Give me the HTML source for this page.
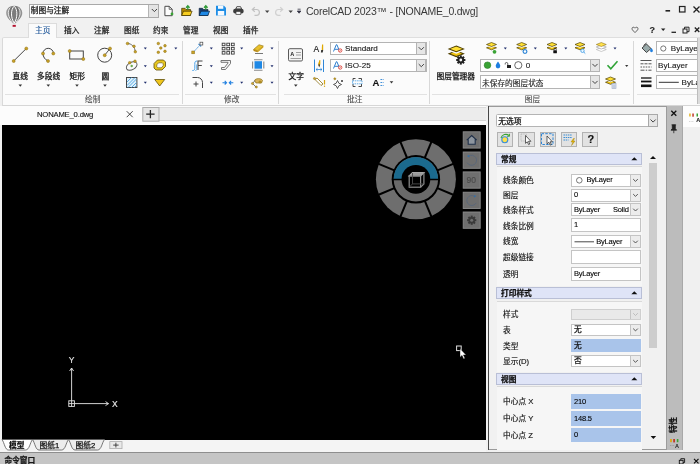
<!DOCTYPE html>
<html lang="zh-CN">
<head>
<meta charset="utf-8">
<title>CorelCAD 2023 - [NONAME_0.dwg]</title>
<style>
html,body{margin:0;padding:0;}
body{width:700px;height:464px;overflow:hidden;position:relative;background:#f0f0f0;
  font-family:"Liberation Sans","Noto Sans CJK SC",sans-serif;font-size:7.7px;color:#1a1a1a;}
.a{position:absolute;}
.t{position:absolute;white-space:nowrap;line-height:1;-webkit-text-stroke:0.25px currentColor;}
.n{-webkit-text-stroke:0.12px currentColor !important;}
svg{position:absolute;overflow:visible;}
/* title */
#title{left:0;top:0;width:700px;height:38px;background:#f1f1f1;}
#combo{left:29px;top:3.5px;width:130px;height:14px;background:#fff;border:1px solid #a9a9a9;box-sizing:border-box;}
#combo .btn{right:0;top:0;width:9px;height:12px;background:#e4e4e4;border-left:1px solid #b5b5b5;}
/* ribbon */
#tabact{left:27.8px;top:22.8px;width:29.5px;height:15.2px;background:#fbfbfb;border:1px solid #dcdcdc;border-bottom:none;box-sizing:border-box;}
#ribbon{left:1.5px;top:37px;width:698.5px;height:68.5px;background:#fbfbfb;border-top:1px solid #dedede;border-left:1px solid #d9d9d9;border-radius:2px 0 0 0;border-bottom:1px solid #d6d6d6;box-sizing:border-box;}
.tab{font-size:7.7px;top:27.4px;color:#222;}
.gl{font-size:7.7px;top:96.4px;color:#4a4a4a;-webkit-text-stroke:0.1px currentColor;}
.sep{width:1px;background:#d8d8d8;top:41px;height:63px;}
.hsep{height:1px;background:#e2e2e2;top:93.8px;}
.lbl{font-size:7.7px;color:#111;}
.dd{width:0;height:0;border-left:2px solid transparent;border-right:2px solid transparent;border-top:2.5px solid #333;}
.ddb{width:0;height:0;border-left:2px solid transparent;border-right:2px solid transparent;border-top:2.5px solid #223a7a;}
.cb{background:#fff;border:1px solid #b4b4b4;box-sizing:border-box;}
.cbb{background:#e6e6e6;border:1px solid #b4b4b4;box-sizing:border-box;}
/* doc tabs */
#docbar{left:0;top:105.5px;width:487px;height:19px;background:#fcfcfc;}
#docgray{left:158px;top:107px;width:329px;height:14.3px;background:#ececec;border-top:1px solid #dadada;border-bottom:1px solid #d6d6d6;box-sizing:border-box;}
#doctab{left:2px;top:106px;width:139px;height:19px;background:#fcfcfc;}
/* canvas */
#canvas{left:2px;top:124.5px;width:484px;height:315px;background:#000;}
/* bottom */
#btabs{left:0;top:439.5px;width:700px;height:12px;background:#f4f4f4;}
#cmd{left:0;top:451.5px;width:700px;height:13px;background:#c5c5c5;border-top:1.3px solid #8e8e8e;box-sizing:border-box;}
/* right panel */
#pp{left:488px;top:106px;width:172px;height:340px;background:#fff;border:1px solid #8c8c8c;box-sizing:border-box;}
#pstrip{left:660px;top:106px;width:20px;height:340px;background:#bdbdbd;}
#rstrip{left:680px;top:106px;width:20px;height:345px;background:#f6f6f6;}
.sec{left:496px;width:146px;height:13px;background:#dfe4f7;border:1px solid #b9bfd6;box-sizing:border-box;}
.sec .t{left:4px;top:2px;font-size:7.7px;font-weight:bold;color:#111;}
.pl{font-size:7.7px;color:#111;left:503px;-webkit-text-stroke:0.15px currentColor;}
.pv{left:571px;width:70px;height:13px;background:#fff;border:1px solid #c4c4c4;box-sizing:border-box;}
.pv .t{left:3px;top:2.5px;font-size:7.7px;color:#111;}
.pv .t.n{font-size:7.5px;letter-spacing:-0.2px;color:#000;-webkit-text-stroke:0.1px #000 !important;}
.pvb{background:#a9c4ea;border-color:#a9c4ea;}
.pdd{right:0;top:0;width:9px;height:11px;background:#ececec;border-left:1px solid #c4c4c4;}
</style>
</head>
<body>
<div id="root" style="position:absolute;left:0;top:0;width:700px;height:464px;will-change:transform;">
<!-- TITLE BAR -->
<div id="title" class="a"></div>
<div id="combo" class="a"><span class="t" style="left:0.8px;top:2.8px;font-size:7.7px;">制图与注解</span><div class="btn a"></div></div>
<div class="t n" style="left:306px;top:6.3px;font-size:10.5px;letter-spacing:-0.23px;color:#3a3a3a;-webkit-text-stroke:0 !important;">CorelCAD 2023™ - [NONAME_0.dwg]</div>

<svg id="icons" width="700" height="464" viewBox="0 0 700 464" style="left:0;top:0;">
<defs><linearGradient id="bg1" x1="0" x2="1"><stop offset="0" stop-color="#a5a5a5"/><stop offset=".3" stop-color="#6f6f6f"/><stop offset=".5" stop-color="#8a8a8a"/><stop offset=".7" stop-color="#6a6a6a"/><stop offset="1" stop-color="#9a9a9a"/></linearGradient></defs>
<path d="M14.2 5.8C9 5.8 6.1 9.5 6.1 13c0 4.5 4.9 8 6.9 10.3h2.4c2-2.3 6.9-5.8 6.9-10.3 0-3.5-2.9-7.2-8.1-7.2z" fill="url(#bg1)"/>
<path d="M14.2 6.3c-3.6 3-3.6 11.5 0 16.8 3.6-5.3 3.6-13.8 0-16.8z" fill="#7c7c7c" stroke="#fff" stroke-width="1"/>
<path d="M10.3 7.5c-3.3 3.5-2.5 9.5 2.3 15M18.1 7.5c3.3 3.5 2.5 9.5-2.3 15" fill="none" stroke="#f4f4f4" stroke-width=".9"/>
<rect x="12.6" y="24.9" width="3.2" height="1.9" fill="#b3122f"/>
<path d="M164.9 6.3h4.3l3 3v6.4h-7.3z" fill="#fdfdfd" stroke="#4a4a4a" stroke-width="1"/><path d="M169.2 6.3v3h3" fill="none" stroke="#4a4a4a" stroke-width=".8"/><circle cx="172" cy="13.9" r="1.4" fill="#3aa335"/>
<path d="M181.7 8.3h3.3l1 1.2h4.5v6h-8.8z" fill="#b88a00" stroke="#3f3200" stroke-width=".7"/><path d="M181.7 15.5l1.8-4.3h8.6l-1.8 4.3z" fill="#f7cd1f" stroke="#3f3200" stroke-width=".7"/><path d="M187.8 9.8v-3.8m-1.8 1.7l1.8-1.9 1.8 1.9" stroke="#2f9a37" stroke-width="1.3" fill="none"/>
<path d="M199.2 8.3h3.3l1 1.2h4.5v6h-8.8z" fill="#1a3a6a" stroke="#10243f" stroke-width=".7"/><path d="M199.2 15.5l1.8-4.3h8.6l-1.8 4.3z" fill="#1e88e5" stroke="#10243f" stroke-width=".7"/><path d="M205.8 9.8v-3.8m-1.8 1.7l1.8-1.9 1.8 1.9" stroke="#2f9a37" stroke-width="1.3" fill="none"/>
<path d="M216 5.8h8l2 2v7.7h-10z" fill="#1e8ee6"/><rect x="218" y="5.8" width="5.3" height="3" fill="#f4f9ff"/><rect x="217.8" y="11" width="6.4" height="4.5" fill="#f4f9ff"/>
<path d="M235.8 9l1-2.3h3.8l1 2.3z" fill="#fff" stroke="#3c3c3c" stroke-width=".9"/><rect x="233.2" y="8.8" width="10.4" height="4.6" rx="2" fill="#3c3c3c"/><rect x="236" y="11.4" width="4.8" height="3" fill="#f4f4f4" stroke="#3c3c3c" stroke-width=".7"/>
<path d="M253 9.5h3.5a2.8 2.8 0 0 1 0 5.8h-2" fill="none" stroke="#c2c2c2" stroke-width="1.2"/><path d="M254.8 7.2l-2.5 2.3 2.5 2.3" fill="none" stroke="#c2c2c2" stroke-width="1.2"/>
<path d="M282 9.5h-3.5a2.8 2.8 0 0 0 0 5.8h2" fill="none" stroke="#d0d0d0" stroke-width="1.2"/><path d="M280.2 7.2l2.5 2.3-2.5 2.3" fill="none" stroke="#d0d0d0" stroke-width="1.2"/>
<path d="M265 10.5h4.4l-2.2 2.6z" fill="#444"/><path d="M288.5 10.5h4.4l-2.2 2.6z" fill="#444"/>
<path d="M297.6 9.2h3M297.3 11h3.6l-1.8 2.2z" fill="#334" stroke="#334" stroke-width=".8"/>
<path d="M151.8 9l2.6 2.6 2.6-2.6" fill="none" stroke="#444" stroke-width="1"/>
<path d="M665.5 10.8h4.6" stroke="#222" stroke-width="1.6"/><rect x="679.5" y="6.5" width="5.5" height="5.5" fill="none" stroke="#222" stroke-width="1.2"/><path d="M693.5 6.5l6 6m0-6l-6 6" stroke="#222" stroke-width="1.3"/>
<path d="M635 32.5c-1-1-3-2.2-3-3.8 0-1.8 2.3-2 3-.5.7-1.5 3-1.3 3 .5 0 1.6-2 2.8-3 3.8z" fill="none" stroke="#444" stroke-width=".8"/>
<path d="M661 28.5h4.4l-2.2 2.6z" fill="#222"/><path d="M671.5 32.3h4.5" stroke="#222" stroke-width="1.3"/>
<rect x="683" y="29" width="4" height="4" fill="none" stroke="#222" stroke-width="1"/><path d="M684.5 29v-1.8h4.5v4.5h-2" fill="none" stroke="#222" stroke-width="1"/>
<path d="M694.8 27.5l4.5 4.5m0-4.5l-4.5 4.5" stroke="#222" stroke-width="1.3"/>
</svg>
<span class="t n" style="left:649.5px;top:25.5px;font-size:9px;font-weight:bold;color:#222;">?</span>
<!-- RIBBON TABS -->
<div id="ribbon" class="a"></div>
<div id="tabact" class="a"></div>
<span class="t tab" style="left:35px;color:#2a5f9e;-webkit-text-stroke:0.15px currentColor;">主页</span>
<span class="t tab" style="left:64px;">插入</span>
<span class="t tab" style="left:94px;">注解</span>
<span class="t tab" style="left:124px;">图纸</span>
<span class="t tab" style="left:153px;">约束</span>
<span class="t tab" style="left:183px;">管理</span>
<span class="t tab" style="left:213px;">视图</span>
<span class="t tab" style="left:243px;">插件</span>

<svg id="rib1" width="700" height="464" viewBox="0 0 700 464" style="left:0;top:0;">
<path d="M13.7 61L26.3 48.5" stroke="#444" stroke-width="1"/><circle cx="13.7" cy="61" r="1.5" fill="#c9a227" stroke="#8a6d10" stroke-width=".5"/><circle cx="26.3" cy="48.5" r="1.5" fill="#c9a227" stroke="#8a6d10" stroke-width=".5"/>
<path d="M48 61c-3-1.5-5-4-5-7.5a5.2 5.2 0 0 1 10.4 0" fill="none" stroke="#444" stroke-width="1"/><circle cx="43" cy="53.5" r="1.5" fill="#c9a227" stroke="#8a6d10" stroke-width=".5"/><circle cx="53.3" cy="53.5" r="1.5" fill="#c9a227" stroke="#8a6d10" stroke-width=".5"/><circle cx="48" cy="61" r="1.5" fill="#c9a227" stroke="#8a6d10" stroke-width=".5"/>
<rect x="69.7" y="51" width="13.6" height="8" fill="none" stroke="#444" stroke-width="1"/><circle cx="69.7" cy="51" r="1.5" fill="#c9a227" stroke="#8a6d10" stroke-width=".5"/><circle cx="83.3" cy="59" r="1.5" fill="#c9a227" stroke="#8a6d10" stroke-width=".5"/>
<circle cx="104.7" cy="55.2" r="7" fill="none" stroke="#444" stroke-width="1"/><path d="M104.7 55.2L110 48.5" stroke="#444" stroke-width=".9"/><circle cx="104.7" cy="55.2" r="1.5" fill="#c9a227" stroke="#8a6d10" stroke-width=".5"/><circle cx="110" cy="48.5" r="1.5" fill="#c9a227" stroke="#8a6d10" stroke-width=".5"/>
<path d="M18.5 84.6h3.6l-1.8 2.2z" fill="#333"/>
<path d="M46.5 84.6h3.6l-1.8 2.2z" fill="#333"/>
<path d="M75.2 84.6h3.6l-1.8 2.2z" fill="#333"/>
<path d="M103.2 84.6h3.6l-1.8 2.2z" fill="#333"/>
<path d="M294.0 84.6h3.6l-1.8 2.2z" fill="#333"/>
<path d="M127.5 43.5c4 0 7.5 3.5 7.8 8.3" fill="none" stroke="#555" stroke-width=".9"/><circle cx="127.5" cy="43.5" r="1.3" fill="#c9a227" stroke="#8a6d10" stroke-width=".5"/><circle cx="134" cy="46.3" r="1.3" fill="#c9a227" stroke="#8a6d10" stroke-width=".5"/><circle cx="135.3" cy="51.8" r="1.3" fill="#c9a227" stroke="#8a6d10" stroke-width=".5"/>
<ellipse cx="131.7" cy="66" rx="5.8" ry="3.7" transform="rotate(-30 131.7 66)" fill="none" stroke="#555" stroke-width=".9"/><circle cx="129.7" cy="62.7" r="1.3" fill="#c9a227" stroke="#8a6d10" stroke-width=".5"/><circle cx="135" cy="61.2" r="1.3" fill="#c9a227" stroke="#8a6d10" stroke-width=".5"/><circle cx="131.7" cy="66" r="1.2" fill="#6aa84f"/>
<rect x="126.5" y="77.5" width="10.4" height="10" fill="#dff0fb" stroke="#444" stroke-width="1"/><path d="M127 82l4.5-4.5M127 85.5l8-8M128 87.5l8.5-8.5M131.5 87.5l5-5M134.5 87.5l2-2" stroke="#4aa3e0" stroke-width=".9"/>
<path d="M143.8 47.5h3l-1.5 2z" fill="#1f2d6b"/>
<path d="M143.8 65.2h3l-1.5 2z" fill="#1f2d6b"/>
<path d="M143.8 81.8h3l-1.5 2z" fill="#1f2d6b"/>
<circle cx="158.3" cy="43.5" r="1.3" fill="#c9a227" stroke="#8a6d10" stroke-width=".5"/>
<circle cx="165" cy="45.7" r="1.3" fill="#c9a227" stroke="#8a6d10" stroke-width=".5"/>
<circle cx="160.8" cy="48" r="1.3" fill="#c9a227" stroke="#8a6d10" stroke-width=".5"/>
<circle cx="158.3" cy="52.3" r="1.3" fill="#c9a227" stroke="#8a6d10" stroke-width=".5"/>
<circle cx="165" cy="51.3" r="1.3" fill="#c9a227" stroke="#8a6d10" stroke-width=".5"/>
<path d="M174.3 47.5h3l-1.5 2z" fill="#1f2d6b"/>
<path d="M157.5 60h6l2 2v4.5l-3.5 3.5h-6l-2-2v-4.5z" fill="#e8c71f" stroke="#5f4f08" stroke-width=".8"/><path d="M158.6 62.8h3.6l1 1v2l-2 2h-3.4l-1-1v-2z" fill="#fbfbfb" stroke="#5f4f08" stroke-width=".6"/>
<path d="M154.7 79.5h10l-5 6.5z" fill="#f0c61c" stroke="#5f4f08" stroke-width=".8"/>
<path d="M194 51.5l6.5-7" stroke="#2f86d6" stroke-width="1" stroke-dasharray="1.6 1"/><path d="M198.2 44.3h2.5v2.5" fill="none" stroke="#2f86d6" stroke-width=".9"/><rect x="191.8" y="51" width="2.8" height="2.8" fill="#c9a227" stroke="#8a6d10" stroke-width=".5"/><rect x="200" y="42.2" width="2.8" height="2.8" fill="#fff" stroke="#444" stroke-width=".7"/>
<path d="M192.3 70.5c2.5 0 2.5-1 2.5-3.5v-2.5c0-2.5 0-3.5 2.5-3.5" fill="none" stroke="#3b9be6" stroke-width=".9"/><path d="M202.5 61h-4.5v9M198 65.5h3.8" fill="none" stroke="#444" stroke-width="1.1"/><path d="M195.5 70.5c1.2 0 1.2-1 1.2-2v-4" fill="none" stroke="#3b9be6" stroke-width=".8"/>
<path d="M192.5 77.5h5a5 5 0 0 1 5 5v5.5" fill="none" stroke="#444" stroke-width="1"/><path d="M193.5 84h5M196 81.5v5" stroke="#444" stroke-width="1"/>
<path d="M209.8 47.5h3l-1.5 2z" fill="#1f2d6b"/>
<path d="M270.5 47.5h3l-1.5 2z" fill="#1f2d6b"/>
<path d="M209.8 65.2h3l-1.5 2z" fill="#1f2d6b"/>
<path d="M270.5 65.2h3l-1.5 2z" fill="#1f2d6b"/>
<path d="M209.8 81.8h3l-1.5 2z" fill="#1f2d6b"/>
<path d="M270.5 81.8h3l-1.5 2z" fill="#1f2d6b"/>
<path d="M240.2 47.5h3l-1.5 2z" fill="#1f2d6b"/>
<path d="M240.2 81.8h3l-1.5 2z" fill="#1f2d6b"/>
<rect x="222.2" y="43.2" width="2.8" height="2.5" fill="#fff" stroke="#3c3c3c" stroke-width=".9"/>
<rect x="226.8" y="43.2" width="2.8" height="2.5" fill="#fff" stroke="#3c3c3c" stroke-width=".9"/>
<rect x="231.4" y="43.2" width="2.8" height="2.5" fill="#fff" stroke="#3c3c3c" stroke-width=".9"/>
<rect x="222.2" y="47.4" width="2.8" height="2.5" fill="#fff" stroke="#3c3c3c" stroke-width=".9"/>
<rect x="226.8" y="47.4" width="2.8" height="2.5" fill="#fff" stroke="#3c3c3c" stroke-width=".9"/>
<rect x="231.4" y="47.4" width="2.8" height="2.5" fill="#fff" stroke="#3c3c3c" stroke-width=".9"/>
<rect x="222.2" y="51.6" width="2.8" height="2.5" fill="#fff" stroke="#3c3c3c" stroke-width=".9"/>
<rect x="226.8" y="51.6" width="2.8" height="2.5" fill="#fff" stroke="#3c3c3c" stroke-width=".9"/>
<rect x="231.4" y="51.6" width="2.8" height="2.5" fill="#fff" stroke="#3c3c3c" stroke-width=".9"/>
<path d="M221 60.5h9.5v3l-5 6h-4v-2h3l3.5-4.5v-.7h-7z" fill="#f4f4f4" stroke="#666" stroke-width=".9"/>
<path d="M222.5 82.7h4m-1.8-1.8l1.8 1.8-1.8 1.8M233.3 82.7h-4m1.8-1.8l-1.8 1.8 1.8 1.8" fill="none" stroke="#1f7fe0" stroke-width="1.1"/>
<path d="M253.5 49.5l5.5-4.8 4.3 1.3-5.5 4.8z" fill="#e9c02a" stroke="#8a6d10" stroke-width=".6"/><path d="M253.5 49.5l4.3 1.3v1.5l-4.3-1.3z" fill="#b8860b"/><path d="M257.8 50.8l5.5-4.8v1.5l-5.5 4.8z" fill="#d4a514"/><path d="M255 53.5h8" stroke="#555" stroke-width=".8"/>
<rect x="254.5" y="61.2" width="7.5" height="7.5" fill="#1e88e5"/><path d="M254 59.7h8.5M254 70.3h8.5M252.6 61.5v7M263.8 61.5v7" stroke="#8a8a8a" stroke-width="1.1"/>
<path d="M254.5 80.5c1-2.5 7-2.5 8 0l-1 2.5h-5.5z" fill="#d9b45a" stroke="#8a6d10" stroke-width=".7"/><path d="M255 80.5l-2.5 3 3.5 3.5" fill="none" stroke="#555" stroke-width=".8"/><circle cx="252.5" cy="83.5" r="1.1" fill="#c9a227" stroke="#8a6d10" stroke-width=".5"/><circle cx="256.3" cy="87" r="1.1" fill="#c9a227" stroke="#8a6d10" stroke-width=".5"/><circle cx="260" cy="82" r="1.1" fill="#c9a227" stroke="#8a6d10" stroke-width=".5"/>
</svg>
<!-- RIBBON GROUP LABELS -->
<span class="t gl" style="left:85px;">绘制</span>
<span class="t gl" style="left:224px;">修改</span>
<span class="t gl" style="left:347px;">批注</span>
<span class="t gl" style="left:524.7px;">图层</span>
<div class="a hsep" style="left:5px;width:174px;"></div>
<div class="a hsep" style="left:185px;width:90.5px;"></div>
<div class="a hsep" style="left:283.5px;width:143px;"></div>
<div class="a hsep" style="left:432px;width:198px;"></div>
<div class="a hsep" style="left:637px;width:60px;"></div>
<div class="a sep" style="left:181.8px;"></div>
<div class="a sep" style="left:278.3px;"></div>
<div class="a sep" style="left:428.8px;"></div>
<div class="a sep" style="left:633px;"></div>

<span class="t lbl" style="left:12.5px;top:73.2px;">直线</span>
<span class="t lbl" style="left:37px;top:73.2px;">多段线</span>
<span class="t lbl" style="left:69.5px;top:73.2px;">矩形</span>
<span class="t lbl" style="left:101.5px;top:73.2px;">圆</span>
<span class="t lbl" style="left:288.5px;top:73.2px;">文字</span>
<span class="t lbl" style="left:436.5px;top:73.2px;">图层管理器</span>
<span class="t n" style="left:313.5px;top:44.5px;font-size:8.5px;color:#111;">A</span>
<span class="t n" style="left:372.5px;top:78px;font-size:9.5px;font-weight:bold;color:#111;">A</span>
<div class="a cb" style="left:330px;top:41.8px;width:96.5px;height:13.5px;"></div><div class="a cbb" style="left:416.3px;top:41.8px;width:10.2px;height:13.5px;"></div>
<div class="a cb" style="left:330px;top:58.7px;width:96.5px;height:13.5px;"></div><div class="a cbb" style="left:416.3px;top:58.7px;width:10.2px;height:13.5px;"></div>
<span class="t n" style="left:345px;top:45px;font-size:8.1px;color:#1a1a1a;">Standard</span>
<span class="t n" style="left:345px;top:61.9px;font-size:8.1px;color:#1a1a1a;">ISO-25</span>
<div class="a cb" style="left:479.7px;top:58.5px;width:120.5px;height:13.5px;"></div><div class="a cbb" style="left:589.7px;top:58.5px;width:10.5px;height:13.5px;"></div>
<div class="a cb" style="left:479.7px;top:75.3px;width:120.5px;height:14px;"></div><div class="a cbb" style="left:589.7px;top:75.3px;width:10.5px;height:14px;"></div>
<span class="t n" style="left:525.8px;top:62px;font-size:8.1px;color:#222;">0</span>
<span class="t" style="left:482px;top:79.6px;font-size:7.7px;color:#222;-webkit-text-stroke:0.12px currentColor;">未保存的图层状态</span>
<div class="a cb" style="left:656px;top:41.3px;width:50px;height:14px;"></div>
<div class="a cb" style="left:656px;top:58.8px;width:50px;height:13.5px;"></div>
<div class="a cb" style="left:656px;top:75.3px;width:50px;height:14px;"></div>
<span class="t n" style="left:670.8px;top:44.6px;font-size:8.1px;color:#222;">ByLayer</span>
<span class="t n" style="left:658px;top:62px;font-size:8.1px;color:#222;">ByLayer</span>
<span class="t n" style="left:681.5px;top:79.3px;font-size:8.1px;color:#222;">ByLayer</span>
<div class="a" style="left:697px;top:38px;width:3px;height:66px;background:#dcdcdc;border-left:1px solid #bdbdbd;"></div>
<svg id="rib2" width="700" height="464" viewBox="0 0 700 464" style="left:0;top:0;">
<rect x="288.5" y="48.7" width="14" height="12.3" rx="1.3" fill="#f4f4f4" stroke="#5a5a5a" stroke-width="1"/><path d="M296 52.5h5M296 55h5M290.5 58.5h10.5" stroke="#8a8a8a" stroke-width=".8"/><text x="290.3" y="56.3" font-size="5.5" font-weight="bold" fill="#222" font-family="Liberation Sans, sans-serif">A</text>
<path d="M322 44.5l1.2 0v5.5l-1.5 1.5z" fill="#e0a800"/><path d="M321.2 50l2 0-.5 2.5h-1.8z" fill="#333"/>
<path d="M314.5 59.5v12.5M323.5 59.5v12.5" stroke="#2f86d6" stroke-width="1"/><path d="M316 69.5h6m-4.5-1.2l-1.5 1.2 1.5 1.2m3-2.4l1.5 1.2-1.5 1.2" fill="none" stroke="#2f86d6" stroke-width=".8"/><path d="M319.5 60l.8 0v4l-1.2 2.5-1-2.5z" fill="#e0a800"/><path d="M318.2 64.5h2l-1 3z" fill="#333"/>
<path d="M315 79.5l2-1.5 6 6-2 1.5z" fill="#fff" stroke="#8a6d10" stroke-width=".8"/><circle cx="314.5" cy="78.5" r="1.1" fill="#c9a227" stroke="#8a6d10" stroke-width=".5"/><path d="M324.5 80v4.5" stroke="#d4a514" stroke-width="1.2"/><circle cx="324.5" cy="86.3" r=".7" fill="#d4a514"/>
<path d="M337.5 80.5l1.3 2.7 2.7 1.3-2.7 1.3-1.3 2.7-1.3-2.7-2.7-1.3 2.7-1.3z" fill="#fff" stroke="#333" stroke-width=".8"/><circle cx="334.8" cy="78.8" r="1" fill="#c9a227" stroke="#8a6d10" stroke-width=".5"/><circle cx="342" cy="81" r="1" fill="#333"/>
<path d="M353 78.5h2.5M358.5 78.5h3v2M353 78.5v2M353 84v2.5h2.5M361.5 84v2.5h-3" fill="none" stroke="#333" stroke-width=".9"/><rect x="352.5" y="80.8" width="9.5" height="3" fill="none" stroke="#3b9be6" stroke-width=".8" stroke-dasharray="1.5 .8"/>
<path d="M380.5 79.5h3M380.5 82.5h3M380.5 85.5h3" stroke="#2f86d6" stroke-width="1.1" stroke-dasharray="1.4 .8"/>
<path d="M389.7 81.2h3.6l-1.8 2.2z" fill="#333"/>
<path d="M333.5 51.5l2.8-6.8h.6l2.8 6.8M334.6 49.3h4" fill="none" stroke="#2f7fd0" stroke-width="1"/><circle cx="340.2" cy="50.5" r="1.7" fill="#fff" stroke="#d9342b" stroke-width=".8"/><path d="M339.2 51.5l2-2" stroke="#d9342b" stroke-width=".7"/>
<path d="M333.5 68.5l2.8-6.8h.6l2.8 6.8M334.6 66.3h4" fill="none" stroke="#2f7fd0" stroke-width="1"/><circle cx="340.2" cy="67.5" r="1.7" fill="#fff" stroke="#d9342b" stroke-width=".8"/><path d="M339.2 68.5l2-2" stroke="#d9342b" stroke-width=".7"/>
<path d="M418.7 47.2l2.6 2.6 2.6-2.6" fill="none" stroke="#444" stroke-width="1"/>
<path d="M418.7 64.10000000000001l2.6 2.6 2.6-2.6" fill="none" stroke="#444" stroke-width="1"/>
<path d="M592.4 63.900000000000006l2.6 2.6 2.6-2.6" fill="none" stroke="#444" stroke-width="1"/>
<path d="M592.4 80.9l2.6 2.6 2.6-2.6" fill="none" stroke="#444" stroke-width="1"/>
<g transform="translate(449 46) scale(1.45)"><path d="M5 3.3l5 2-5 2-5-2z" fill="#f0c40f" stroke="#4f3f00" stroke-width=".7"/><path d="M5 1.1l5.4 2.1-5.4 2.1-5.4-2.1z" fill="#fbfbfb"/><path d="M5 0l5 2-5 2-5-2z" fill="#ffe033" stroke="#4f3f00" stroke-width=".7"/></g>
<rect x="459.8" y="55.4" width="2" height="9.2" transform="rotate(0 460.8 60)" fill="#222"/><rect x="459.8" y="55.4" width="2" height="9.2" transform="rotate(45 460.8 60)" fill="#222"/><rect x="459.8" y="55.4" width="2" height="9.2" transform="rotate(90 460.8 60)" fill="#222"/><rect x="459.8" y="55.4" width="2" height="9.2" transform="rotate(135 460.8 60)" fill="#222"/><circle cx="460.8" cy="60" r="3.3" fill="#222"/><circle cx="460.8" cy="60" r="1.4" fill="#fbfbfb"/>
<g transform="translate(486.5 42.5) scale(1.0)"><path d="M5 3.3l5 2-5 2-5-2z" fill="#f0c40f" stroke="#4f3f00" stroke-width=".7"/><path d="M5 1.1l5.4 2.1-5.4 2.1-5.4-2.1z" fill="#fbfbfb"/><path d="M5 0l5 2-5 2-5-2z" fill="#ffe033" stroke="#4f3f00" stroke-width=".7"/></g><circle cx="494.5" cy="51.8" r="1.9" fill="#3aa335"/>
<g transform="translate(516.7 42.5) scale(1.0)"><path d="M5 3.3l5 2-5 2-5-2z" fill="#f0c40f" stroke="#4f3f00" stroke-width=".7"/><path d="M5 1.1l5.4 2.1-5.4 2.1-5.4-2.1z" fill="#fbfbfb"/><path d="M5 0l5 2-5 2-5-2z" fill="#ffe033" stroke="#4f3f00" stroke-width=".7"/></g><circle cx="525" cy="51.5" r="1.9" fill="#fff" stroke="#2f86d6" stroke-width="1.2"/>
<g transform="translate(547 42.5) scale(1.0)"><path d="M5 3.3l5 2-5 2-5-2z" fill="#f0c40f" stroke="#4f3f00" stroke-width=".7"/><path d="M5 1.1l5.4 2.1-5.4 2.1-5.4-2.1z" fill="#fbfbfb"/><path d="M5 0l5 2-5 2-5-2z" fill="#ffe033" stroke="#4f3f00" stroke-width=".7"/></g><rect x="553.3" y="50.3" width="3.6" height="3" rx=".5" fill="#111"/><path d="M554 50.3v-1a1.1 1.1 0 0 1 2.2 0v1" fill="none" stroke="#111" stroke-width=".7"/>
<g transform="translate(575 42.5) scale(1.0)"><path d="M5 3.3l5 2-5 2-5-2z" fill="#f0c40f" stroke="#4f3f00" stroke-width=".7"/><path d="M5 1.1l5.4 2.1-5.4 2.1-5.4-2.1z" fill="#fbfbfb"/><path d="M5 0l5 2-5 2-5-2z" fill="#ffe033" stroke="#4f3f00" stroke-width=".7"/></g><circle cx="582.5" cy="50.8" r="1.7" fill="#eaf6ff" stroke="#3b9be6" stroke-width=".8"/><path d="M583.7 52l1.6 1.6" stroke="#3b9be6" stroke-width=".9"/>
<g transform="translate(596.3 42.5)"><path d="M5 5l5 2-5 2-5-2z" fill="#fff" stroke="#aaa" stroke-width=".6"/><path d="M5 2.5l5 2-5 2-5-2z" fill="#fff" stroke="#999" stroke-width=".6"/><path d="M5 0l5 2-5 2-5-2z" fill="#ffe14d" stroke="#7a5c00" stroke-width=".5"/></g>
<path d="M503.8 47.5h3l-1.5 2z" fill="#1f2d6b"/>
<path d="M533.8 47.5h3l-1.5 2z" fill="#1f2d6b"/>
<path d="M564.3 47.5h3l-1.5 2z" fill="#1f2d6b"/>
<path d="M613.5 47.5h3l-1.5 2z" fill="#1f2d6b"/>
<circle cx="487.5" cy="65.2" r="3.3" fill="#3aa335" stroke="#2b7d28" stroke-width=".6"/>
<path d="M498 61.5c1.3 2 2.3 3.2 2.3 4.6a2.3 2.3 0 0 1-4.6 0c0-1.4 1-2.6 2.3-4.6z" fill="#1f7fe0"/>
<rect x="507" y="65" width="4" height="3" fill="#222"/><path d="M507.8 65v-1.2a1.3 1.3 0 0 0-2.6 0v.7" fill="none" stroke="#222" stroke-width=".7"/>
<circle cx="518.3" cy="65.2" r="3.6" fill="#fff" stroke="#444" stroke-width=".8"/>
<path d="M607.5 65.2l3.3 3.5 6.7-7.4" fill="none" stroke="#2fa336" stroke-width="1.6"/><path d="M625.1 65.0h3.2l-1.6 2z" fill="#333"/>
<g transform="translate(605.5 77) scale(1.0)"><path d="M5 3.3l5 2-5 2-5-2z" fill="#f0c40f" stroke="#4f3f00" stroke-width=".7"/><path d="M5 1.1l5.4 2.1-5.4 2.1-5.4-2.1z" fill="#fbfbfb"/><path d="M5 0l5 2-5 2-5-2z" fill="#ffe033" stroke="#4f3f00" stroke-width=".7"/></g><rect x="612" y="83.5" width="4" height="5" fill="#dfe6f2" stroke="#9aa7c0" stroke-width=".6"/><path d="M613.3 84.5v3.5M614.7 84.5v3.5" stroke="#9aa7c0" stroke-width=".5"/>
<path d="M642 48l4.5-4 4.5 4.5-4.5 4z" fill="#9aa" stroke="#333" stroke-width=".9"/><path d="M643.5 45.5l3-2.5" stroke="#333" stroke-width=".9"/><path d="M651.5 48c.8 1.3 1.4 2 1.4 2.8a1.4 1.4 0 0 1-2.8 0c0-.8.6-1.5 1.4-2.8z" fill="#1f7fe0"/>
<path d="M640.5 60.5h11" stroke="#555" stroke-width="1"/><path d="M640.5 63.8h11" stroke="#555" stroke-width="1" stroke-dasharray="3 1"/><path d="M640.5 67h11" stroke="#555" stroke-width="1" stroke-dasharray="1.6 1"/><path d="M640.5 70.2h11" stroke="#555" stroke-width="1" stroke-dasharray="4 1.2 1.5 1.2"/>
<path d="M641 78h10.5" stroke="#111" stroke-width="1.3"/><path d="M641 81.5h10.5" stroke="#111" stroke-width="1.8"/><path d="M641 85.8h10.5" stroke="#111" stroke-width="2.6"/>
<circle cx="663.3" cy="48.5" r="2.6" fill="#fff" stroke="#555" stroke-width=".8"/>
<path d="M658.8 82.3h20" stroke="#333" stroke-width="1"/>
</svg>
<!-- DOC TAB BAR -->
<div id="docbar" class="a"></div>
<div id="docgray" class="a"></div>
<div id="doctab" class="a"></div>
<span class="t n" style="left:37px;top:110.8px;font-size:7.7px;letter-spacing:-0.2px;color:#111;">NONAME_0.dwg</span>

<!-- CANVAS -->
<div id="canvas" class="a"></div>

<!-- BOTTOM -->
<div id="btabs" class="a"></div>
<div id="cmd" class="a"><span class="t" style="left:4.4px;top:4.6px;font-size:7.7px;font-weight:bold;">命令窗口</span></div>

<svg id="cv" width="700" height="464" viewBox="0 0 700 464" style="left:0;top:0;">
<path d="M126.7 111.2l6 6m0-6l-6 6" stroke="#333" stroke-width=".9"/>
<rect x="142.8" y="107.5" width="16.2" height="13.7" fill="#e6e6e6" stroke="#adadad" stroke-width="1"/><path d="M146.2 114.1h8.4M150.4 109.9v8.4" stroke="#222" stroke-width="1.3"/>
<circle cx="415.9" cy="179.3" r="40" fill="#6e6e6e"/>
<circle cx="415.9" cy="179.3" r="24.2" fill="#000"/>
<path d="M436.2 170.9L453.8 163.6" stroke="#000" stroke-width="2"/>
<path d="M424.3 159.0L431.6 141.4" stroke="#000" stroke-width="2"/>
<path d="M407.5 159.0L400.2 141.4" stroke="#000" stroke-width="2"/>
<path d="M395.6 170.9L378.0 163.6" stroke="#000" stroke-width="2"/>
<path d="M395.6 187.7L378.0 195.0" stroke="#000" stroke-width="2"/>
<path d="M407.5 199.6L400.2 217.2" stroke="#000" stroke-width="2"/>
<path d="M424.3 199.6L431.6 217.2" stroke="#000" stroke-width="2"/>
<path d="M436.2 187.7L453.8 195.0" stroke="#000" stroke-width="2"/>
<circle cx="415.9" cy="179.3" r="22.2" fill="#6a6a6a"/>
<path d="M393.7 179.3a22.2 22.2 0 0 1 44.4 0z" fill="#1b6a8e"/>
<path d="M392.9 179.5h46" stroke="#000" stroke-width="1.6"/>
<circle cx="415.9" cy="179.3" r="14.4" fill="#000"/>
<g fill="none" stroke="#8e8e8e" stroke-width="1.2"><path d="M409.2 175.8l3.3-3.3h11.4l-3.3 3.3z" fill="#9c9c9c" stroke="#a8a8a8"/><rect x="409.2" y="175.8" width="11.4" height="11.4"/><path d="M423.9 172.5v11.4l-3.3 3.3"/><path d="M412.5 173v10.9h11M412.5 183.9l-3 3" stroke="#4e4e4e" stroke-width=".9"/></g>
<rect x="463.2" y="131.8" width="17" height="16.3" fill="#6f6f6f" stroke="#8c8c8c" stroke-width=".9"/>
<rect x="463.2" y="152" width="17" height="16.3" fill="#6f6f6f" stroke="#8c8c8c" stroke-width=".9"/>
<rect x="463.2" y="171.9" width="17" height="16.3" fill="#6f6f6f" stroke="#8c8c8c" stroke-width=".9"/>
<rect x="463.2" y="192.2" width="17" height="16.3" fill="#6f6f6f" stroke="#8c8c8c" stroke-width=".9"/>
<rect x="463.2" y="212" width="17" height="16.3" fill="#6f6f6f" stroke="#8c8c8c" stroke-width=".9"/>
<path d="M468.2 139.3l3.5-3.2 3.5 3.2v5h-7z" fill="#8d959e" stroke="none"/><path d="M466.7 140.2l5-4.6 5 4.6M468.2 139.3v5h7v-5" fill="none" stroke="#1f2f48" stroke-width="1.1"/>
<path d="M468.7 156.2a5 5 0 1 1 -1.5 6.5" fill="none" stroke="#58677a" stroke-width=".9"/><path d="M466.9 155.89999999999998l2.3-.8.3 2.3z" fill="#2f6fae"/>
<path d="M474.7 196.39999999999998a5 5 0 1 0 1.5 6.5" fill="none" stroke="#58677a" stroke-width=".9"/><path d="M476.5 196.09999999999997l-2.3-.8-.3 2.3z" fill="#2f6fae"/>
<rect x="470.7" y="215.6" width="2" height="9.2" transform="rotate(0 471.7 220.2)" fill="#3a3a3a"/><rect x="470.7" y="215.6" width="2" height="9.2" transform="rotate(45 471.7 220.2)" fill="#3a3a3a"/><rect x="470.7" y="215.6" width="2" height="9.2" transform="rotate(90 471.7 220.2)" fill="#3a3a3a"/><rect x="470.7" y="215.6" width="2" height="9.2" transform="rotate(135 471.7 220.2)" fill="#3a3a3a"/><circle cx="471.7" cy="220.2" r="3.3" fill="#3a3a3a"/><circle cx="471.7" cy="220.2" r="1.5" fill="#6f6f6f"/>
<g fill="none" stroke="#e8e8e8" stroke-width=".9"><rect x="68.8" y="400.8" width="5.6" height="5.6"/><path d="M71.6 400.8V368M69.6 371l2-3 2 3M74.4 403.6H108.5M105.5 401.6l3 2-3 2M68.8 403.6h5.6M71.6 400.8v5.6"/></g>
<rect x="456.6" y="346" width="4.6" height="4.6" fill="none" stroke="#e0e0e0" stroke-width="1"/><path d="M460 348.6v8.6l2-1.8 1.6 3.5 1.4-.6-1.6-3.4h2.7z" fill="#fff" stroke="#000" stroke-width=".4"/>
<path d="M2 439.5h30.5c-2.5 3-3 10.5-7 10.5h-17c-3.5 0-4-7-6.5-10.5z" fill="#fff" stroke="#555" stroke-width=".8"/>
<path d="M32.5 439.5h36c-2.5 3-3 10.5-7 10.5h-22.5c-3.5 0-4-7-6.5-10.5z" fill="#ececec" stroke="#555" stroke-width=".8"/>
<path d="M68.5 439.5h36c-2.5 3-3 10.5-7 10.5h-22.5c-3.5 0-4-7-6.5-10.5z" fill="#ececec" stroke="#555" stroke-width=".8"/>
<rect x="109.8" y="441.6" width="12.2" height="7" fill="#e9e9e9" stroke="#adadad" stroke-width=".8"/><path d="M113.2 445.1h5.4M115.9 442.7v4.8" stroke="#333" stroke-width=".9"/>
</svg>
<span class="t n" style="left:71.6px;top:356px;font-size:8.5px;color:#e8e8e8;transform:translateX(-50%);">Y</span>
<span class="t n" style="left:112px;top:399.5px;font-size:8.5px;color:#e8e8e8;">X</span>
<span class="t n" style="left:466.5px;top:176px;font-size:8.5px;color:#4a4a4a;">90</span>
<span class="t" style="left:9px;top:442px;font-size:7.7px;font-weight:bold;color:#111;">模型</span>
<span class="t" style="left:39.6px;top:442px;font-size:7.7px;color:#111;">图纸1</span>
<span class="t" style="left:75.6px;top:442px;font-size:7.7px;color:#111;">图纸2</span>
<!-- RIGHT PANEL -->
<div class="a" style="left:486px;top:106px;width:214px;height:346px;background:#f0f0f0;"></div>
<div class="a" style="left:487.5px;top:106.3px;width:178.5px;height:344px;background:#f1f1f1;border-top:1px solid #9a9a9a;border-bottom:1px solid #9a9a9a;box-sizing:border-box;"></div>
<div class="a" style="left:488px;top:106.3px;width:1.3px;height:344px;background:#474747;"></div>
<div class="a" style="left:665.8px;top:106.3px;width:17px;height:343.5px;background:#bcbcbc;border-left:1px solid #9c9c9c;border-right:1px solid #a8a8a8;box-sizing:border-box;"></div>
<div class="a" style="left:682.5px;top:106.3px;width:17.5px;height:20.5px;background:#fdfdfd;"></div>
<div class="a cb" style="left:496.3px;top:114.2px;width:162px;height:12.7px;border-color:#b4b4b4;border-radius:1.5px;"><span class="t" style="left:1px;top:2.6px;font-size:7.7px;color:#111;">无选项</span></div>
<div class="a cbb" style="left:648px;top:114.2px;width:10.3px;height:12.7px;border-color:#a8a8a8;"></div>
<div class="a" style="left:497.2px;top:131.7px;width:16.2px;height:15px;background:#e2e2e2;border:1px solid #b2b2b2;box-sizing:border-box;"></div>
<div class="a" style="left:518.4px;top:131.7px;width:16.2px;height:15px;background:#e2e2e2;border:1px solid #b2b2b2;box-sizing:border-box;"></div>
<div class="a" style="left:539.6px;top:131.7px;width:16.2px;height:15px;background:#e2e2e2;border:1px solid #b2b2b2;box-sizing:border-box;"></div>
<div class="a" style="left:560.8px;top:131.7px;width:16.2px;height:15px;background:#e2e2e2;border:1px solid #b2b2b2;box-sizing:border-box;"></div>
<div class="a" style="left:582.0px;top:131.7px;width:16.2px;height:15px;background:#e2e2e2;border:1px solid #b2b2b2;box-sizing:border-box;"></div>
<span class="t n" style="left:587.4px;top:133.5px;font-size:11px;font-weight:bold;color:#111;">?</span>
<div class="a sec" style="top:152.5px;height:12.6px;"><span class="t" style="top:2.0px;">常规</span></div>
<div class="a sec" style="top:286.5px;height:12.8px;"><span class="t" style="top:2.1px;">打印样式</span></div>
<div class="a sec" style="top:372.5px;height:12.6px;"><span class="t" style="top:2.0px;">视图</span></div>
<div class="a" style="left:497.2px;top:166px;width:144.5px;height:120px;background:#f6f6f6;border-top:1px solid #d9d9d9;box-sizing:border-box;"></div>
<div class="a" style="left:497.2px;top:300.5px;width:144.5px;height:71.5px;background:#f6f6f6;border-top:1px solid #d9d9d9;box-sizing:border-box;"></div>
<div class="a" style="left:497.2px;top:386px;width:144.5px;height:64px;background:#f6f6f6;border-top:1px solid #d9d9d9;box-sizing:border-box;"></div>
<span class="t pl" style="top:177.0px;">线条颜色</span>
<div class="a pv" style="top:173.7px;height:13px;"><span class="t n" style="left:14.5px;top:1.6px;">ByLayer</span><div class="a pdd" style="height:11px;"></div></div>
<span class="t pl" style="top:192.0px;">图层</span>
<div class="a pv" style="top:188.7px;height:13px;"><span class="t n" style="left:2px;top:1.6px;">0</span><div class="a pdd" style="height:11px;"></div></div>
<span class="t pl" style="top:207.0px;">线条样式</span>
<div class="a pv" style="top:203.3px;height:13px;"><span class="t n" style="left:2px;top:1.6px;">ByLayer</span><span class="t n" style="left:41px;top:1.6px;">Solid</span><div class="a pdd" style="height:11px;"></div></div>
<span class="t pl" style="top:222.5px;">线条比例</span>
<div class="a pv" style="top:218.2px;height:13.5px;"><span class="t n" style="left:2px;top:1.9px;">1</span></div>
<span class="t pl" style="top:238.4px;">线宽</span>
<div class="a pv" style="top:235.3px;height:13px;"><span class="t n" style="left:24.2px;top:1.6px;">ByLayer</span><div class="a pdd" style="height:11px;"></div></div>
<span class="t pl" style="top:254.2px;">超级链接</span>
<div class="a pv" style="top:250.3px;height:13.8px;"></div>
<span class="t pl" style="top:270.9px;">透明</span>
<div class="a pv" style="top:266.8px;height:14.5px;"><span class="t n" style="left:2px;top:2.4px;">ByLayer</span></div>
<span class="t pl" style="top:310.7px;">样式</span>
<div class="a pv" style="top:308.5px;height:11.7px;background:#e9e9e9;border-color:#cfcfcf;"><div class="a pdd" style="height:9.7px;background:#e4e4e4;"></div></div>
<span class="t pl" style="top:326.5px;">表</span>
<div class="a pv" style="top:323.6px;height:12.2px;"><span class="t" style="left:2px;top:1.2px;">无</span><div class="a pdd" style="height:10.2px;"></div></div>
<span class="t pl" style="top:342.7px;">类型</span>
<div class="a pv pvb" style="top:339px;height:13.4px;"><span class="t" style="left:2px;top:1.9px;">无</span></div>
<span class="t pl" style="top:357.5px;">显示(D)</span>
<div class="a pv" style="top:355px;height:12.2px;"><span class="t" style="left:2px;top:1.2px;">否</span><div class="a pdd" style="height:10.2px;"></div></div>
<span class="t pl" style="top:398.3px;">中心点 X</span>
<div class="a pv pvb" style="top:394.3px;height:14.5px;"><span class="t n" style="left:2px;top:2.4px;">210</span></div>
<span class="t pl" style="top:415.0px;">中心点 Y</span>
<div class="a pv pvb" style="top:411.3px;height:14.3px;"><span class="t n" style="left:2px;top:2.3px;">148.5</span></div>
<span class="t pl" style="top:431.7px;">中心点 Z</span>
<div class="a pv pvb" style="top:428px;height:14.3px;"><span class="t n" style="left:2px;top:2.3px;">0</span></div>
<div class="a" style="left:649px;top:162.5px;width:8px;height:185px;background:#cdcdcd;"></div>
<svg id="pn" width="700" height="464" viewBox="0 0 700 464" style="left:0;top:0;">
<path d="M650.5 119.5l2.6 2.6 2.6-2.6" fill="none" stroke="#444" stroke-width="1"/>
<path d="M633.2 179.1l2.3 2.3 2.3-2.3" fill="none" stroke="#444" stroke-width=".9"/>
<path d="M633.2 194.1l2.3 2.3 2.3-2.3" fill="none" stroke="#444" stroke-width=".9"/>
<path d="M633.2 208.7l2.3 2.3 2.3-2.3" fill="none" stroke="#444" stroke-width=".9"/>
<path d="M633.2 240.7l2.3 2.3 2.3-2.3" fill="none" stroke="#444" stroke-width=".9"/>
<path d="M633.2 313.2l2.3 2.3 2.3-2.3" fill="none" stroke="#b8b8b8" stroke-width=".9"/>
<path d="M633.2 328.6l2.3 2.3 2.3-2.3" fill="none" stroke="#444" stroke-width=".9"/>
<path d="M633.2 360.0l2.3 2.3 2.3-2.3" fill="none" stroke="#444" stroke-width=".9"/>
<circle cx="579.3" cy="180.3" r="2.8" fill="#fff" stroke="#555" stroke-width=".8"/>
<path d="M574.5 241.8h19.5" stroke="#333" stroke-width=".9"/>
<path d="M631.3 160.2l3-3 3 3z" fill="#111"/>
<path d="M631.3 294.3l3-3 3 3z" fill="#111"/>
<path d="M631.3 380.2l3-3 3 3z" fill="#111"/>
<path d="M650 159l3-3 3 3z" fill="#111"/><path d="M650.6 436l2.8 3 2.8-3z" fill="#111"/>
<path d="M671.3 110.8l5 5m0-5l-5 5" stroke="#111" stroke-width="1.3"/>
<path d="M671.5 124.8h4.6M672.3 125v3.5l-1.3 1.7h5.6l-1.3-1.7v-3.5zM673.8 130.2v3" fill="#222" stroke="#222" stroke-width=".8"/>
<circle cx="504.8" cy="139.8" r="3" fill="#ffe14d" stroke="#3b8fd6" stroke-width="1.1"/><path d="M501 138a5 5 0 0 1 8-2.5" fill="none" stroke="#3aa335" stroke-width="1.1"/><path d="M509.5 133.8v2.5h-2.5" fill="none" stroke="#3aa335" stroke-width=".9"/>
<rect x="521" y="134" width="5.5" height="7" fill="none" stroke="#aaa" stroke-width=".7" stroke-dasharray="1 .7"/><path d="M525.5 135.5v7.8l1.8-1.5 1.3 2.8 1.2-.6-1.3-2.7h2.4z" fill="#fff" stroke="#222" stroke-width=".7"/>
<rect x="541.5" y="133.7" width="11.5" height="10.8" fill="none" stroke="#2f86d6" stroke-width="1" stroke-dasharray="2.5 1.3"/><path d="M547 136v7.8l1.8-1.5 1.3 2.8 1.2-.6-1.3-2.7h2.4z" fill="#fff" stroke="#222" stroke-width=".7"/>
<path d="M563.5 135h8.5M563.5 137.5h8.5M563.5 140h5" stroke="#3b8fd6" stroke-width="1" stroke-dasharray="1.5 .7"/><path d="M573.5 138.5l-2.5 3.5h2l-1.5 3.5 3.5-4.5h-2l1.5-2.5z" fill="#e6b800" stroke="#9a7608" stroke-width=".4"/>
<rect x="689.3" y="113.5" width="1.3" height="3" fill="#e0a800"/><rect x="692.3" y="113.5" width="1.5" height="3.2" fill="#c0392b"/><rect x="696.5" y="113.5" width="1.5" height="3" fill="#3aa335"/><path d="M689 121.5h5" stroke="#bbb" stroke-width=".6" stroke-dasharray="1 .6"/>
<rect x="670.2" y="439" width="1.6" height="3.2" fill="#e0a800"/><rect x="673.2" y="439" width="1.8" height="3.4" fill="#c0392b"/><rect x="676.8" y="439" width="1.6" height="3.2" fill="#3aa335"/><path d="M670 445.5h4.5" stroke="#888" stroke-width=".6" stroke-dasharray="1 .6"/><text x="675" y="448" font-size="5.5" font-weight="bold" fill="#222" font-family="Liberation Sans, sans-serif">A</text>
<path d="M694 458.8l4.5 4.5m0-4.5l-4.5 4.5" stroke="#111" stroke-width="1.2"/><rect x="679.3" y="460.3" width="3.8" height="3.7" fill="none" stroke="#111" stroke-width=".9"/><path d="M680.8 460.3v-1.6h3.8v3.8h-1.5" fill="none" stroke="#111" stroke-width=".9"/>
</svg>
<span class="t n" style="left:696.3px;top:117.8px;font-size:5.5px;font-weight:bold;color:#222;">A</span>
<span class="t" style="left:674.3px;top:424.5px;font-size:7.9px;font-weight:bold;color:#111;transform:translate(-50%,-50%) rotate(-90deg);">特性</span>
</div>
</body>
</html>
